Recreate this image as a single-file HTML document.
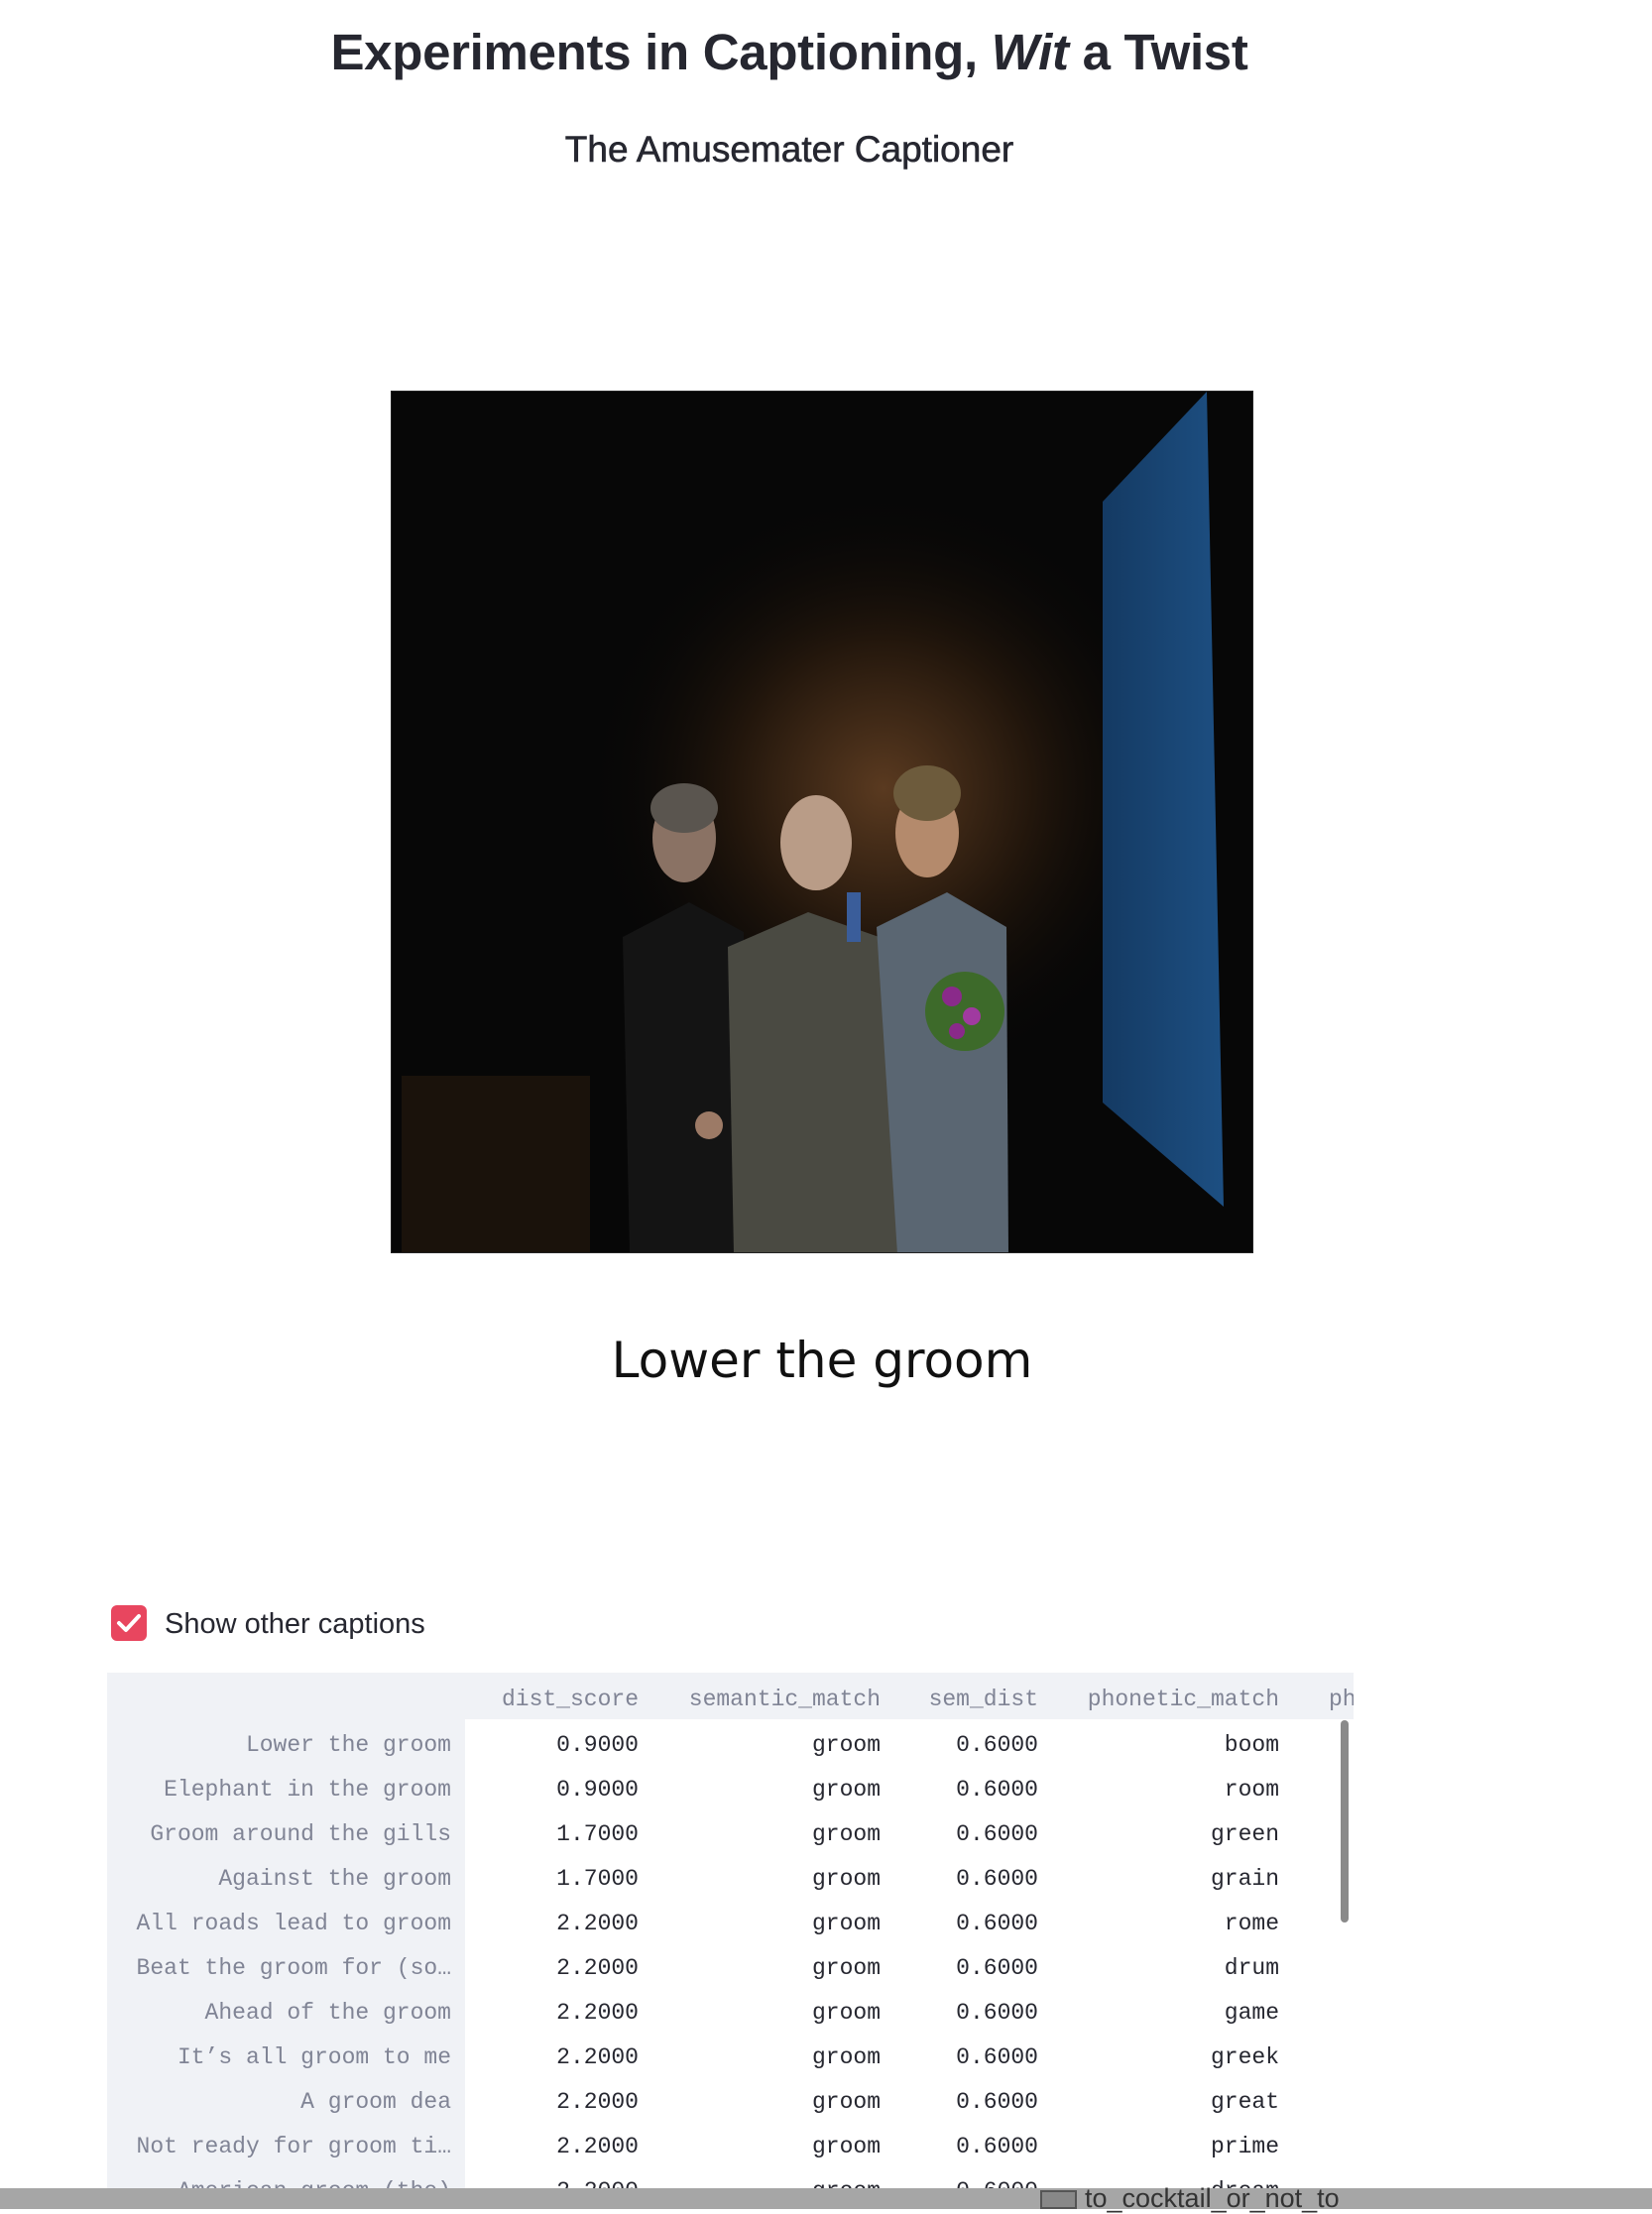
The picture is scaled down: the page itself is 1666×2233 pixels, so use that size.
<!DOCTYPE html>
<html><head><meta charset="utf-8"><style>
*{margin:0;padding:0;box-sizing:border-box}
body{width:1666px;height:2228px;background:#fff;position:relative;overflow:hidden;font-family:"Liberation Sans",sans-serif;color:#262730}
.abs{position:absolute}
h1{position:absolute;left:0;width:1592px;top:23px;text-align:center;font-size:51px;font-weight:bold;letter-spacing:-0.3px}
h2{position:absolute;left:0;width:1592px;top:130px;text-align:center;font-size:37px;font-weight:normal;-webkit-text-stroke:0.6px #262730}
.img{left:394px;top:394px;width:870px;height:870px;background:#060606;overflow:hidden;border:1px solid #222}
.cap{left:394px;width:870px;top:1343px;text-align:center;font-family:"DejaVu Sans",sans-serif;font-size:50px;color:#111}
.tbl{left:108px;top:1687px;width:1257px;height:541px;background:#fafafa;overflow:hidden;font-family:"Liberation Mono",monospace;font-size:23px}
.hdr{position:absolute;left:0;top:0;width:1257px;height:47px;background:#f0f2f6}
.idx{position:absolute;left:0;top:47px;width:361px;height:600px;background:#f0f2f6}
.t{position:absolute;white-space:nowrap;color:#262730}
.h{color:#808495}
.i{color:#808495}
</style></head><body>
<h1>Experiments in Captioning, <i>Wit</i> a Twist</h1>
<h2>The Amusemater Captioner</h2>
<div class="abs img">
<svg width="870" height="870" viewBox="0 0 870 870">
<defs>
<radialGradient id="g1" cx="0.57" cy="0.46" r="0.35"><stop offset="0" stop-color="#5a3a20"/><stop offset="0.5" stop-color="#22160c"/><stop offset="1" stop-color="#060606" stop-opacity="0"/></radialGradient>
<linearGradient id="bl" x1="0" y1="0" x2="1" y2="0"><stop offset="0" stop-color="#143a63"/><stop offset="1" stop-color="#1d4f82"/></linearGradient>
</defs>
<rect width="870" height="870" fill="#070707"/>
<rect width="870" height="870" fill="url(#g1)"/>
<polygon points="717,111 822,0 839,822 717,717" fill="url(#bl)"/>
<rect x="10" y="690" width="190" height="180" fill="#1a120b"/>
<polygon points="233,550 300,515 355,545 355,870 240,870" fill="#141414"/>
<ellipse cx="295" cy="450" rx="32" ry="45" fill="#8a7264"/>
<ellipse cx="295" cy="420" rx="34" ry="25" fill="#5a554f"/>
<polygon points="339,560 420,525 520,560 525,870 345,870" fill="#4a4a42"/>
<ellipse cx="428" cy="455" rx="36" ry="48" fill="#b99c87"/>
<rect x="459" y="505" width="14" height="50" fill="#3a5d9a"/>
<polygon points="489,540 560,505 620,540 622,870 510,870" fill="#5a6672"/>
<ellipse cx="540" cy="445" rx="32" ry="45" fill="#b48a6c"/>
<ellipse cx="540" cy="405" rx="34" ry="28" fill="#6d5b3c"/>
<ellipse cx="578" cy="625" rx="40" ry="40" fill="#3d6a2a"/>
<circle cx="565" cy="610" r="10" fill="#8a2a8a"/><circle cx="585" cy="630" r="9" fill="#a03aa0"/><circle cx="570" cy="645" r="8" fill="#8a2a8a"/>
<circle cx="320" cy="740" r="14" fill="#9c7a66"/>
</svg>
</div>
<div class="abs cap">Lower the groom</div>
<div class="abs" style="left:112px;top:1619px;width:36px;height:36px;background:#e8465f;border-radius:6px">
<svg width="36" height="36"><path d="M8 18 L15 25 L28 11" stroke="#fff" stroke-width="4" fill="none" stroke-linecap="round" stroke-linejoin="round"/></svg></div>
<div class="abs" style="left:166px;top:1620px;font-size:29px;line-height:36px">Show other captions</div>
<div class="abs tbl">
<div class="hdr"></div><div class="idx"></div>
<div style="position:absolute;left:361px;top:47px;width:896px;height:600px;background:#fff"></div>
<div class="t h" style="right:721px;top:14px">dist_score</div>
<div class="t h" style="right:477px;top:14px">semantic_match</div>
<div class="t h" style="right:318px;top:14px">sem_dist</div>
<div class="t h" style="right:75px;top:14px">phonetic_match</div>
<div class="t h" style="left:1232px;top:14px">ph</div>
<div style="position:absolute;left:1244px;top:48px;width:8px;height:204px;background:#8a8a8a;border-radius:4px"></div>
<div id="rows"></div>
</div>
<div class="abs" style="left:0;top:2207px;width:1666px;height:21px;background:#a6a6a6"></div>
<div class="abs" style="left:1049px;top:2209px;width:37px;height:19px;background:#888;border:2px solid #555"></div>
<div class="abs" style="left:1094px;top:2202px;font-size:27px;color:#333">to_cocktail_or_not_to</div>
<script>
var d=[["Lower the groom","0.9000","boom"],["Elephant in the groom","0.9000","room"],["Groom around the gills","1.7000","green"],["Against the groom","1.7000","grain"],["All roads lead to groom","2.2000","rome"],["Beat the groom for (so…","2.2000","drum"],["Ahead of the groom","2.2000","game"],["It’s all groom to me","2.2000","greek"],["A groom dea","2.2000","great"],["Not ready for groom ti…","2.2000","prime"],["American groom (the)","2.2000","dream"]];
var h="";d.forEach(function(r,k){var y=60+k*45;
h+='<div class="t i" style="right:910px;top:'+y+'px">'+r[0]+'</div>';
h+='<div class="t" style="right:721px;top:'+y+'px">'+r[1]+'</div>';
h+='<div class="t" style="right:477px;top:'+y+'px">groom</div>';
h+='<div class="t" style="right:318px;top:'+y+'px">0.6000</div>';
h+='<div class="t" style="right:75px;top:'+y+'px">'+r[2]+'</div>';});
document.getElementById("rows").innerHTML=h;
</script>
</body></html>
